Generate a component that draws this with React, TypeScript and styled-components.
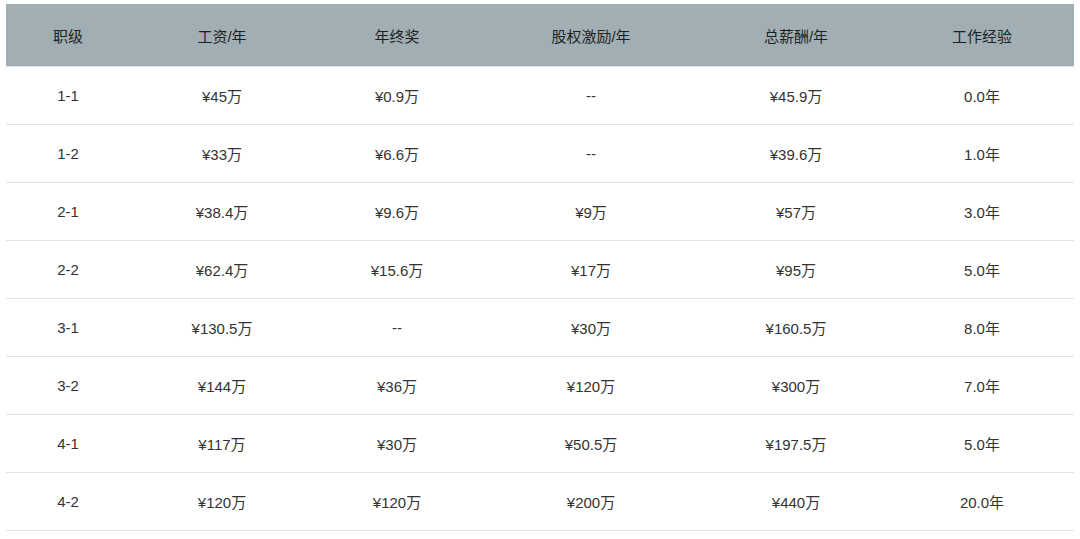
import React from "react";
import styled, { createGlobalStyle } from "styled-components";

const Global = createGlobalStyle`
  html, body { margin: 0; padding: 0; background: #ffffff; }
  body { font-family: "Liberation Sans", "Noto Sans CJK SC", sans-serif; }
`;

const Page = styled.div`
  padding: 4px 6px 0 6px;
  width: 1068px;
`;

const Table = styled.table`
  width: 1068px;
  border-collapse: collapse;
  table-layout: fixed;
  font-family: "Liberation Sans", "Noto Sans CJK SC", sans-serif;
  font-size: 15px;
`;

const HeadCell = styled.th`
  height: 62px;
  padding: 0;
  background: #a1afb5;
  color: #1f1f1f;
  font-weight: normal;
  text-align: center;
  border-bottom: 1px solid #dfe3e5;
`;

const Cell = styled.td`
  height: 57px;
  padding: 0;
  color: #333333;
  text-align: center;
  border-bottom: 1px solid #e2e2e2;
`;

const widths = [124, 184, 166, 222, 188, 184];
const headers = ["职级", "工资/年", "年终奖", "股权激励/年", "总薪酬/年", "工作经验"];
const rows: string[][] = [
  ["1-1", "¥45万", "¥0.9万", "--", "¥45.9万", "0.0年"],
  ["1-2", "¥33万", "¥6.6万", "--", "¥39.6万", "1.0年"],
  ["2-1", "¥38.4万", "¥9.6万", "¥9万", "¥57万", "3.0年"],
  ["2-2", "¥62.4万", "¥15.6万", "¥17万", "¥95万", "5.0年"],
  ["3-1", "¥130.5万", "--", "¥30万", "¥160.5万", "8.0年"],
  ["3-2", "¥144万", "¥36万", "¥120万", "¥300万", "7.0年"],
  ["4-1", "¥117万", "¥30万", "¥50.5万", "¥197.5万", "5.0年"],
  ["4-2", "¥120万", "¥120万", "¥200万", "¥440万", "20.0年"],
];

export default function App() {
  return (
    <>
      <Global />
      <Page>
        <Table>
          <colgroup>
            {widths.map((w, i) => (
              <col key={i} style={{ width: w }} />
            ))}
          </colgroup>
          <thead>
            <tr>
              {headers.map((h) => (
                <HeadCell key={h}>{h}</HeadCell>
              ))}
            </tr>
          </thead>
          <tbody>
            {rows.map((r, i) => (
              <tr key={i}>
                {r.map((c, j) => (
                  <Cell key={j}>{c}</Cell>
                ))}
              </tr>
            ))}
          </tbody>
        </Table>
      </Page>
    </>
  );
}
